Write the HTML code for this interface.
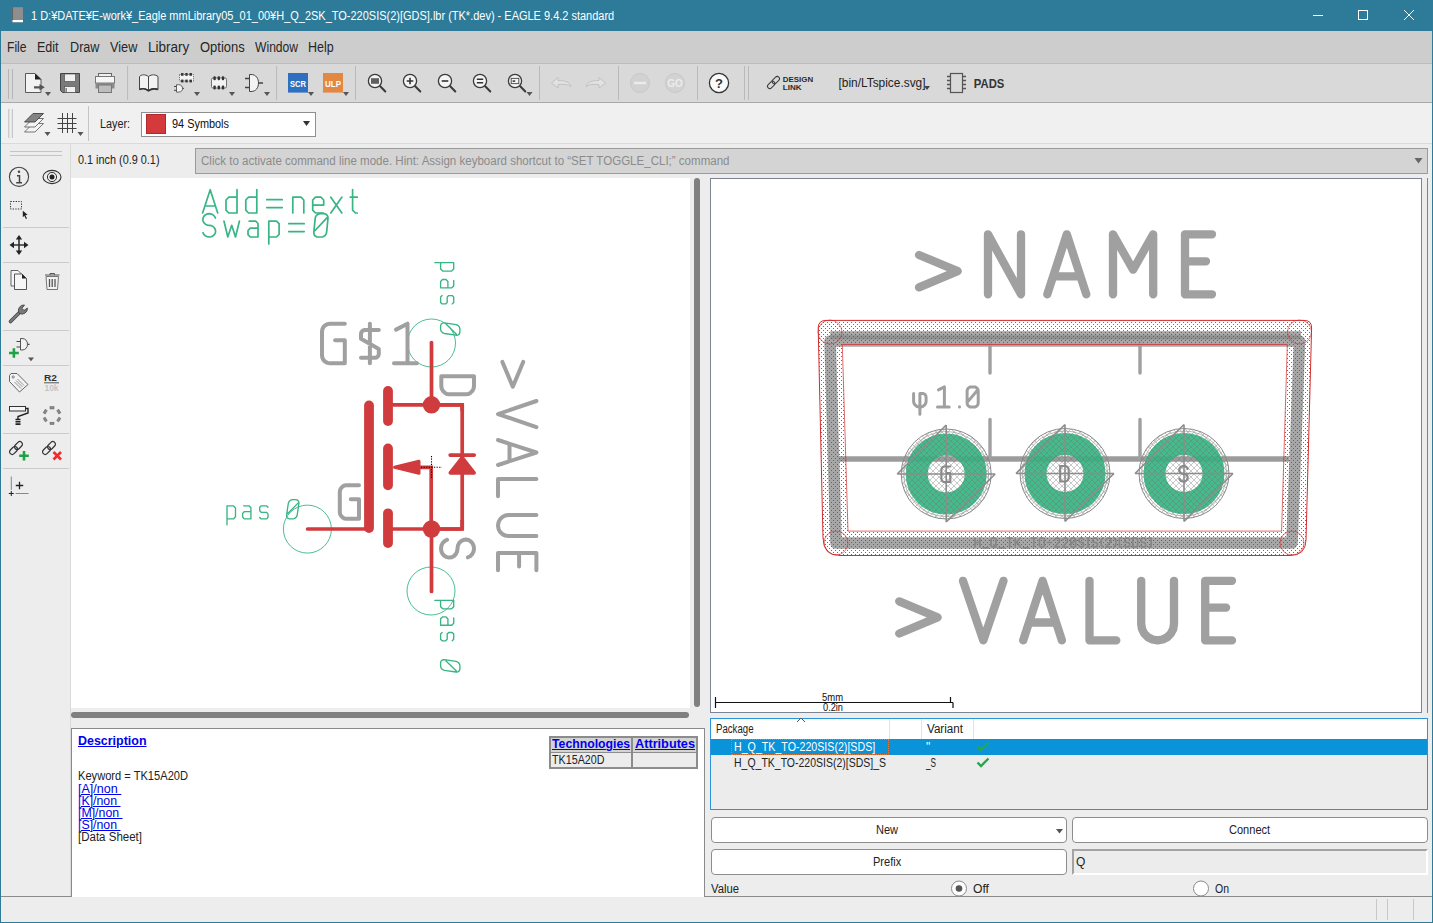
<!DOCTYPE html><html><head><meta charset="utf-8"><style>
html,body{margin:0;padding:0;}
body{width:1433px;height:923px;overflow:hidden;position:relative;background:#ededed;font-family:"Liberation Sans", sans-serif;}
div,svg{box-sizing:border-box;}
a{color:#0000ee;}
</style></head><body>
<div style="position:absolute;left:0px;top:0px;width:1433px;height:31px;background:#2d7b99;"></div>
<svg style="position:absolute;left:10px;top:6px;" width="16" height="18" viewBox="10 6 16 18"><rect x="11.5" y="7.2" width="11.5" height="15" fill="#8e8e8e"/><rect x="11.5" y="7.2" width="1.5" height="15" fill="#5e5e5e"/><rect x="12.5" y="20" width="10.5" height="2.2" fill="#fff"/></svg>
<div style="position:absolute;left:31.20px;top:9.94px;font-size:12px;line-height:1;color:#ffffff;white-space:nowrap;transform:scaleX(0.9153);transform-origin:0 0;">1 D:&yen;DATE&yen;E-work&yen;_Eagle mmLibrary05_01_00&yen;H_Q_2SK_TO-220SIS(2)[GDS].lbr (TK*.dev) - EAGLE 9.4.2 standard</div>
<svg style="position:absolute;left:1300px;top:0px;" width="133" height="31" viewBox="1300 0 133 31"><path d="M1313 15.5H1323" stroke="#fff" stroke-width="1"/><rect x="1358.5" y="10.5" width="9" height="9" fill="none" stroke="#fff" stroke-width="1"/><path d="M1404 10L1414 20M1414 10L1404 20" stroke="#fff" stroke-width="1"/></svg>
<div style="position:absolute;left:0px;top:31px;width:1px;height:892px;background:#2d7b99;"></div>
<div style="position:absolute;left:1432px;top:31px;width:1px;height:892px;background:#2d7b99;"></div>
<div style="position:absolute;left:0px;top:922px;width:1433px;height:1px;background:#2d7b99;"></div>
<div style="position:absolute;left:1px;top:31px;width:1431px;height:32px;background:#cdcdcd;"></div>
<div style="position:absolute;left:1px;top:63px;width:1431px;height:1px;background:#bdbdbd;"></div>
<div style="position:absolute;left:6.50px;top:39.95px;font-size:14px;line-height:1;color:#262626;white-space:nowrap;transform:scaleX(0.8645);transform-origin:0 0;">File</div>
<div style="position:absolute;left:37.40px;top:39.95px;font-size:14px;line-height:1;color:#262626;white-space:nowrap;transform:scaleX(0.8954);transform-origin:0 0;">Edit</div>
<div style="position:absolute;left:70.20px;top:39.95px;font-size:14px;line-height:1;color:#262626;white-space:nowrap;transform:scaleX(0.9030);transform-origin:0 0;">Draw</div>
<div style="position:absolute;left:110.40px;top:39.95px;font-size:14px;line-height:1;color:#262626;white-space:nowrap;transform:scaleX(0.9072);transform-origin:0 0;">View</div>
<div style="position:absolute;left:148.40px;top:39.95px;font-size:14px;line-height:1;color:#262626;white-space:nowrap;transform:scaleX(0.9652);transform-origin:0 0;">Library</div>
<div style="position:absolute;left:200.40px;top:39.95px;font-size:14px;line-height:1;color:#262626;white-space:nowrap;transform:scaleX(0.9265);transform-origin:0 0;">Options</div>
<div style="position:absolute;left:254.90px;top:39.95px;font-size:14px;line-height:1;color:#262626;white-space:nowrap;transform:scaleX(0.8656);transform-origin:0 0;">Window</div>
<div style="position:absolute;left:308.00px;top:39.95px;font-size:14px;line-height:1;color:#262626;white-space:nowrap;transform:scaleX(0.8926);transform-origin:0 0;">Help</div>
<div style="position:absolute;left:1px;top:64px;width:1431px;height:38px;background:#d9d9d9;"></div>
<div style="position:absolute;left:1px;top:102px;width:1431px;height:1px;background:#a9a9a9;"></div>
<div style="position:absolute;left:1px;top:103px;width:1431px;height:40px;background:#f0f0f0;"></div>
<div style="position:absolute;left:1px;top:143px;width:1431px;height:1px;background:#dadada;"></div>
<div style="position:absolute;left:1px;top:144px;width:69px;height:753px;background:#ededed;"></div>
<div style="position:absolute;left:70px;top:144px;width:1px;height:753px;background:#dadada;"></div>
<div style="position:absolute;left:1px;top:896px;width:1431px;height:1px;background:#8c8c8c;"></div>
<div style="position:absolute;left:1px;top:897px;width:1431px;height:25px;background:#ededed;"></div>
<div style="position:absolute;left:1376px;top:899px;width:1px;height:21px;background:#c8c8c8;"></div>
<div style="position:absolute;left:1387px;top:899px;width:1px;height:21px;background:#c8c8c8;"></div>
<div style="position:absolute;left:1413px;top:899px;width:1px;height:21px;background:#c8c8c8;"></div>
<svg style="position:absolute;left:0;top:0" width="1433" height="145" viewBox="0 0 1433 145"><path d="M8.5 69V99" stroke="#b5b5b5" stroke-width="1"/><path d="M12.5 69V99" stroke="#b5b5b5" stroke-width="1"/><path d="M25.5 73.5H35L41 79.5V92.5H25.5Z" fill="#f3f3f3" stroke="#5a5a5a" stroke-width="1"/><path d="M35 73.5L41.5 79.5H35Z" fill="#222"/><path d="M34 86.2H39.5V84L44.8 87.3L39.5 90.6V88.4H34Z" fill="#555"/><path d="M45.0 92.0h6l-3 4z" fill="#555"/><path d="M60.5 73.5H79.5V92.5H62.5L60.5 90.5Z" fill="#7a7a7a" stroke="#444" stroke-width="1"/><rect x="64.5" y="74" width="11" height="7.5" fill="#f0f0f0" stroke="#444" stroke-width="0.6"/><rect x="64.5" y="86.5" width="11" height="6" fill="#f0f0f0" stroke="#444" stroke-width="0.6"/><rect x="65.6" y="88" width="1" height="4" fill="#444"/><rect x="98.5" y="73.5" width="13" height="7" fill="#f0f0f0" stroke="#666" stroke-width="1"/><rect x="95.5" y="76.5" width="19" height="6.5" fill="#f6f6f6" stroke="#777" stroke-width="1"/><rect x="95.5" y="83" width="19" height="5.5" fill="#8a8a8a"/><rect x="98.5" y="85" width="13" height="7.5" fill="#bdbdbd" stroke="#777" stroke-width="1"/><path d="M127.6 66V100" stroke="#b9b9b9" stroke-width="1"/><path d="M148.5 76.5C145 74 141.5 74.5 139.5 76.5V89.5C141.5 88 145 88 148.5 90.5C152 88 155.5 88 158 89.5V76.5C155.5 74.5 152 74 148.5 76.5Z" fill="#f2f2f2" stroke="#444" stroke-width="1"/><path d="M148.5 76.5V90.5" stroke="#444" stroke-width="1"/><path d="M139.5 89.5C142 88.5 145.5 88.5 148.5 90.8C151.5 88.5 155 88.5 158 89.5" stroke="#333" stroke-width="1.6" fill="none"/><rect x="179.5" y="74.5" width="14" height="6.5" fill="#f3f3f3" stroke="#555" stroke-width="0.8" stroke-dasharray="1.2 1"/><rect x="181.1" y="73" width="2.4" height="2.8" fill="#333"/><rect x="181.1" y="79.6" width="2.4" height="2.8" fill="#333"/><rect x="185.3" y="73" width="2.4" height="2.8" fill="#333"/><rect x="185.3" y="79.6" width="2.4" height="2.8" fill="#333"/><rect x="189.5" y="73" width="2.4" height="2.8" fill="#333"/><rect x="189.5" y="79.6" width="2.4" height="2.8" fill="#333"/><path d="M176.5 84.7H178.5C181.5 84.7 182.5 86.5 182.5 88.4C182.5 90.3 181.5 92.1 178.5 92.1H176.5Z" fill="#f3f3f3" stroke="#444" stroke-width="0.8"/><path d="M174 86.5H176.5M174 90.3H176.5M182.5 88.4H184" stroke="#444" stroke-width="1"/><path d="M194.0 92.0h6l-3 4z" fill="#555"/><rect x="211.5" y="78" width="15" height="10" rx="1.5" fill="#f3f3f3" stroke="#555" stroke-width="0.8"/><rect x="213.4" y="76.3" width="2.4" height="4" rx="1" fill="#333"/><rect x="213.4" y="85.6" width="2.4" height="4" rx="1" fill="#333"/><rect x="217.6" y="76.3" width="2.4" height="4" rx="1" fill="#333"/><rect x="217.6" y="85.6" width="2.4" height="4" rx="1" fill="#333"/><rect x="221.8" y="76.3" width="2.4" height="4" rx="1" fill="#333"/><rect x="221.8" y="85.6" width="2.4" height="4" rx="1" fill="#333"/><path d="M229.0 92.0h6l-3 4z" fill="#555"/><path d="M249.5 74.5H251C256 74.5 258.5 78.5 258.5 83C258.5 87.5 256 91.5 251 91.5H249.5Z" fill="#f3f3f3" stroke="#444" stroke-width="1"/><path d="M245 78.5H249.5M245 87.5H249.5M258.5 83H263" stroke="#444" stroke-width="1.4"/><path d="M264.0 92.0h6l-3 4z" fill="#555"/><path d="M276.6 66V100" stroke="#b9b9b9" stroke-width="1"/><rect x="288" y="73" width="20" height="19.6" fill="#2f6fc0"/><text x="298" y="87" font-family="Liberation Sans" font-size="9.5" font-weight="bold" fill="#fff" text-anchor="middle" textLength="16" lengthAdjust="spacingAndGlyphs">SCR</text><path d="M308.0 92.0h6l-3 4z" fill="#555"/><rect x="323" y="73" width="20" height="19.6" fill="#e28843"/><text x="333" y="87" font-family="Liberation Sans" font-size="9.5" font-weight="bold" fill="#fff" text-anchor="middle" textLength="16" lengthAdjust="spacingAndGlyphs">ULP</text><path d="M343.0 92.0h6l-3 4z" fill="#555"/><path d="M355.5 66V100" stroke="#b9b9b9" stroke-width="1"/><circle cx="375.0" cy="81" r="6.6" fill="#f4f4f4" stroke="#3a3a3a" stroke-width="1.3"/><path d="M380.2 86.2L385.3 91.5" stroke="#3a3a3a" stroke-width="2" stroke-linecap="round"/><rect x="371" y="78.2" width="8" height="5.6" fill="#606060"/><circle cx="410.0" cy="81" r="6.6" fill="#f4f4f4" stroke="#3a3a3a" stroke-width="1.3"/><path d="M415.2 86.2L420.3 91.5" stroke="#3a3a3a" stroke-width="2" stroke-linecap="round"/><path d="M406.7 81H413.3M410 77.7V84.3" stroke="#333" stroke-width="1.6"/><circle cx="445.0" cy="81" r="6.6" fill="#f4f4f4" stroke="#3a3a3a" stroke-width="1.3"/><path d="M450.2 86.2L455.3 91.5" stroke="#3a3a3a" stroke-width="2" stroke-linecap="round"/><path d="M441.7 81H448.3" stroke="#333" stroke-width="1.6"/><circle cx="480.0" cy="81" r="6.6" fill="#f4f4f4" stroke="#3a3a3a" stroke-width="1.3"/><path d="M485.2 86.2L490.3 91.5" stroke="#3a3a3a" stroke-width="2" stroke-linecap="round"/><path d="M476.8 79.3H483.2M476.8 82.7H483.2" stroke="#333" stroke-width="1.4"/><circle cx="515.0" cy="81" r="6.6" fill="#f4f4f4" stroke="#3a3a3a" stroke-width="1.3"/><path d="M520.2 86.2L525.3 91.5" stroke="#3a3a3a" stroke-width="2" stroke-linecap="round"/><rect x="511.2" y="78.4" width="7.6" height="5.2" fill="#f4f4f4" stroke="#555" stroke-width="1"/><rect x="512.6" y="80.2" width="2.6" height="1.8" fill="#555"/><path d="M526.5 92.0h6l-3 4z" fill="#555"/><path d="M539.5 66V100" stroke="#b9b9b9" stroke-width="1"/><path d="M551.5 83L558 77.5V80.5C564 80.5 570 81.5 571 86.5C568 84 563 84 558 84.5V88Z" fill="#e2e2e2" stroke="#c2c2c2" stroke-width="1"/><path d="M605.5 83L599 77.5V80.5C593 80.5 587 81.5 586 86.5C589 84 594 84 599 84.5V88Z" fill="#e2e2e2" stroke="#c2c2c2" stroke-width="1"/><path d="M618.5 66V100" stroke="#b9b9b9" stroke-width="1"/><circle cx="640" cy="83" r="9.5" fill="#d2d2d2" stroke="#c8c8c8" stroke-width="1"/><path d="M634 83H646" stroke="#ececec" stroke-width="2.4"/><circle cx="675" cy="83" r="9.5" fill="#d2d2d2" stroke="#c8c8c8" stroke-width="1"/><text x="675" y="87" font-family="Liberation Sans" font-size="10" font-weight="bold" fill="#ececec" text-anchor="middle">GO</text><path d="M697.5 66V100" stroke="#b9b9b9" stroke-width="1"/><circle cx="719" cy="83" r="9.6" fill="#fafafa" stroke="#333" stroke-width="1.3"/><text x="719" y="88" font-family="Liberation Sans" font-size="13" font-weight="bold" fill="#333" text-anchor="middle">?</text><path d="M744.5 66V100" stroke="#b9b9b9" stroke-width="1"/><path d="M748.5 66V100" stroke="#b9b9b9" stroke-width="1"/><g transform="translate(773.5 82.5) rotate(-45)" fill="none" stroke="#3a3a3a" stroke-width="1"><rect x="-7.5" y="-2.3" width="8.5" height="4.6" rx="2.3"/><rect x="-1" y="-2.3" width="8.5" height="4.6" rx="2.3"/></g><text x="782.8" y="81.8" font-family="Liberation Sans" font-size="7.8" font-weight="bold" fill="#2a2a2a" textLength="30.3" lengthAdjust="spacingAndGlyphs">DESIGN</text><text x="782.8" y="89.5" font-family="Liberation Sans" font-size="7.8" font-weight="bold" fill="#2a2a2a" textLength="18.8" lengthAdjust="spacingAndGlyphs">LINK</text><text x="838.5" y="87" font-family="Liberation Sans" font-size="12" fill="#222" textLength="87" lengthAdjust="spacingAndGlyphs">[bin/LTspice.svg]</text><path d="M924.0 86.0h6l-3 4z" fill="#444"/><rect x="950.5" y="73.5" width="12" height="19" fill="none" stroke="#555" stroke-width="1.2"/><path d="M947 76.5H950.5M962.5 76.5H966" stroke="#555" stroke-width="1.5"/><path d="M947 80.5H950.5M962.5 80.5H966" stroke="#555" stroke-width="1.5"/><path d="M947 84.5H950.5M962.5 84.5H966" stroke="#555" stroke-width="1.5"/><path d="M947 88.5H950.5M962.5 88.5H966" stroke="#555" stroke-width="1.5"/><text x="973.8" y="88" font-family="Liberation Sans" font-size="13" font-weight="bold" fill="#333" textLength="30.5" lengthAdjust="spacingAndGlyphs">PADS</text><path d="M8.8 109V138" stroke="#bdbdbd" stroke-width="1"/><path d="M12.3 109V138" stroke="#bdbdbd" stroke-width="1"/><path d="M24.5 132L33 123.5H43.5L35 132Z" fill="#f4f4f4" stroke="#555" stroke-width="0.8"/><path d="M24.5 127L33 118.5H43.5L35 127Z" fill="#f4f4f4" stroke="#555" stroke-width="0.8"/><path d="M24.5 122L33 113.5H43.5L35 122Z" fill="#838383" stroke="#333" stroke-width="0.8"/><path d="M44.5 132.0h6l-3 4z" fill="#555"/><path d="M62.5 113V133M67.5 113V133M72.5 113V133M57.5 118.5H76.5M57.5 123.5H76.5M57.5 128.5H76.5" stroke="#444" stroke-width="1"/><path d="M77.5 132.0h6l-3 4z" fill="#555"/><path d="M88.5 106V141" stroke="#c4c4c4" stroke-width="1"/></svg>
<div style="position:absolute;left:100.00px;top:118.34px;font-size:12px;line-height:1;color:#222;white-space:nowrap;transform:scaleX(0.8996);transform-origin:0 0;">Layer:</div>
<div style="position:absolute;left:141px;top:112px;width:175px;height:25px;background:#fff;border:1px solid #8f8f8f;"></div>
<div style="position:absolute;left:146px;top:114px;width:20px;height:20px;background:#d4393c;border:1px solid #b02a2d;"></div>
<div style="position:absolute;left:172.00px;top:118.34px;font-size:12px;line-height:1;color:#111;white-space:nowrap;transform:scaleX(0.9092);transform-origin:0 0;">94 Symbols</div>
<svg style="position:absolute;left:300px;top:118px" width="12" height="10"><path d="M3 3h7l-3.5 5z" fill="#333"/></svg>
<svg style="position:absolute;left:0;top:0" width="72" height="520" viewBox="0 0 72 520"><path d="M10 151.5H62M10 155.5H62" stroke="#c4c4c4" stroke-width="1"/><circle cx="19" cy="176.8" r="9.6" fill="none" stroke="#444" stroke-width="1.1"/><circle cx="19" cy="171.8" r="1.2" fill="#444"/><path d="M17 175.8H19.5V182.8M16.2 182.8H22" stroke="#444" stroke-width="1.5" fill="none"/><ellipse cx="52" cy="177" rx="9" ry="6.6" fill="none" stroke="#333" stroke-width="1.1"/><circle cx="52" cy="177" r="4.6" fill="none" stroke="#333" stroke-width="1"/><circle cx="52" cy="177" r="2.5" fill="#222"/><rect x="10.5" y="201.5" width="11" height="7.5" fill="none" stroke="#333" stroke-width="1" stroke-dasharray="1.3 1.3"/><path d="M22.8 210.8L27.6 214.7L25.4 215.2L27 218.5L25.9 219L24.3 215.7L22.8 217.2Z" fill="#222"/><path d="M3 227.5H69" stroke="#cbcbcb" stroke-width="1"/><path d="M19 237V253M11 245H27" stroke="#333" stroke-width="1.6"/><path d="M19 235L15.8 239.5H22.2ZM19 255L15.8 250.5H22.2ZM9.5 245L14 241.8V248.2ZM28.5 245L24 241.8V248.2Z" fill="#222"/><path d="M3 262.5H69" stroke="#cbcbcb" stroke-width="1"/><path d="M11 270.5H18L22 274.5V286H11Z" fill="#f6f6f6" stroke="#555" stroke-width="0.9"/><path d="M14.5 274H22L26.5 278.5V289.5H14.5Z" fill="#f6f6f6" stroke="#444" stroke-width="0.9"/><path d="M22 274L26.5 278.5H22Z" fill="#222"/><path d="M45 275H59.5M50 275V273.5H54.5V275" stroke="#555" stroke-width="1" fill="none"/><path d="M46 276.5H58.5L57.5 289.5H47Z" fill="#f2f2f2" stroke="#666" stroke-width="0.9"/><path d="M49.5 279V287M52.2 279V287M55 279V287" stroke="#555" stroke-width="1.3"/><path d="M10.5 321.5L20.5 311.5" stroke="#444" stroke-width="3.6" stroke-linecap="round"/><path d="M10.5 321.5L20.5 311.5" stroke="#7a7a7a" stroke-width="2.2" stroke-linecap="round"/><path d="M19 313A5.5 5.5 0 0 1 24.5 305L22 308.3L24 310.5L27.4 308A5.5 5.5 0 0 1 19.5 313.5Z" fill="#7a7a7a" stroke="#444" stroke-width="0.9"/><path d="M3 330.5H69" stroke="#cbcbcb" stroke-width="1"/><path d="M20.5 338.5H22C25.5 338.5 27.5 341 27.5 344.3C27.5 347.5 25.5 350 22 350H20.5Z" fill="#f3f3f3" stroke="#444" stroke-width="0.9"/><path d="M16.5 341.5H20.5M16.5 347H20.5M27.5 344.3H29.5" stroke="#444" stroke-width="1.2"/><path d="M13.9 348.2V357.8M9 353H18.8" stroke="#1ea246" stroke-width="2.6"/><path d="M28 357.5h6l-3 3.8z" fill="#555"/><path d="M3 365.5H69" stroke="#cbcbcb" stroke-width="1"/><path d="M9.5 375.5L11 373.5H17L28 384.5L19.5 392L9.5 381.5Z" fill="#f3f3f3" stroke="#555" stroke-width="0.9"/><circle cx="13.2" cy="377" r="1.1" fill="none" stroke="#555" stroke-width="0.7"/><path d="M16 380.5L22.5 387M17.5 379L24 385.5M14.5 382L21 388.5" stroke="#666" stroke-width="0.7"/><text x="50.5" y="381.2" font-family="Liberation Sans" font-size="9" font-weight="bold" fill="#333" text-anchor="middle" textLength="13" lengthAdjust="spacingAndGlyphs">R2</text><path d="M44 382.8H59" stroke="#444" stroke-width="0.9"/><text x="51.5" y="390.8" font-family="Liberation Sans" font-size="8.5" font-weight="bold" fill="#c4c4c4" text-anchor="middle">10k</text><rect x="9.5" y="406.5" width="16" height="4.5" fill="#f6f6f6" stroke="#333" stroke-width="1"/><path d="M25.5 408.5H28V413L18 416.5V420" stroke="#222" stroke-width="1.4" fill="none"/><path d="M15.5 419.5H20.5M15.5 421.8H20.5M15.5 424.1H20.5" stroke="#222" stroke-width="1.6"/><rect x="50.0" y="406.6" width="4" height="2.4" fill="#888" stroke="#666" stroke-width="0.5" transform="rotate(0 52.0 407.8)"/><rect x="43.2" y="410.5" width="4" height="2.4" fill="#888" stroke="#666" stroke-width="0.5" transform="rotate(-60 45.2 411.7)"/><rect x="43.2" y="418.3" width="4" height="2.4" fill="#888" stroke="#666" stroke-width="0.5" transform="rotate(-120 45.2 419.5)"/><rect x="50.0" y="422.2" width="4" height="2.4" fill="#888" stroke="#666" stroke-width="0.5" transform="rotate(-180 52.0 423.4)"/><rect x="56.8" y="418.3" width="4" height="2.4" fill="#888" stroke="#666" stroke-width="0.5" transform="rotate(-240 58.8 419.5)"/><rect x="56.8" y="410.5" width="4" height="2.4" fill="#888" stroke="#666" stroke-width="0.5" transform="rotate(-300 58.8 411.7)"/><path d="M3 433.5H69" stroke="#cbcbcb" stroke-width="1"/><g transform="translate(16 448) rotate(-45)" fill="none" stroke="#333" stroke-width="1.2"><rect x="-8" y="-2.6" width="9" height="5.2" rx="2.6"/><rect x="-1" y="-2.6" width="9" height="5.2" rx="2.6"/></g><path d="M24 451V460.5M19.2 455.7H28.8" stroke="#1ea246" stroke-width="2.6"/><g transform="translate(49 448) rotate(-45)" fill="none" stroke="#333" stroke-width="1.2"><rect x="-8" y="-2.6" width="9" height="5.2" rx="2.6"/><rect x="-1" y="-2.6" width="9" height="5.2" rx="2.6"/></g><path d="M53.5 452L61 459.5M61 452L53.5 459.5" stroke="#f02b2b" stroke-width="2.6"/><path d="M3 468.5H69" stroke="#cbcbcb" stroke-width="1"/><path d="M11.3 476.5V490" stroke="#888" stroke-width="1"/><path d="M15.6 493.5H28.6" stroke="#888" stroke-width="1"/><path d="M11.3 491V496M8.8 493.5H13.8" stroke="#222" stroke-width="1"/><path d="M19.5 481.8V489.2M15.8 485.5H23.2" stroke="#222" stroke-width="1.3"/></svg>
<div style="position:absolute;left:78.30px;top:154.44px;font-size:12px;line-height:1;color:#222;white-space:nowrap;transform:scaleX(0.9051);transform-origin:0 0;">0.1 inch (0.9 0.1)</div>
<div style="position:absolute;left:195px;top:148px;width:1233px;height:26px;background:#d4d4d4;border:1px solid #9b9b9b;"></div>
<div style="position:absolute;left:201.00px;top:154.84px;font-size:12px;line-height:1;color:#8b8b8b;white-space:nowrap;transform:scaleX(0.9617);transform-origin:0 0;">Click to activate command line mode. Hint: Assign keyboard shortcut to &ldquo;SET TOGGLE_CLI;&rdquo; command</div>
<svg style="position:absolute;left:1412px;top:156px" width="14" height="10"><path d="M2.5 2h8l-4 5.5z" fill="#666"/></svg>
<div style="position:absolute;left:71px;top:178px;width:619px;height:530px;background:#ffffff;"></div>
<div style="position:absolute;left:694px;top:178px;width:6px;height:529px;background:#808080;border-radius:3px;"></div>
<div style="position:absolute;left:71px;top:712px;width:618px;height:6px;background:#808080;border-radius:3px;"></div>
<div style="position:absolute;left:710px;top:178px;width:712px;height:535px;background:#ffffff;border:1px solid #7d8594;"></div>
<div style="position:absolute;left:1427px;top:178px;width:1px;height:535px;background:#7d8594;"></div>
<div style="position:absolute;left:71px;top:728px;width:634px;height:169px;background:#ffffff;border-top:1px solid #8a8a8a;border-left:1px solid #8a8a8a;border-right:1px solid #8a8a8a;"></div>
<div style="position:absolute;left:78.20px;top:734.82px;font-size:12.5px;line-height:1;color:#0000ee;white-space:nowrap;font-weight:bold;transform:scaleX(0.9963);transform-origin:0 0;"><span style="text-decoration:underline">Description</span></div>
<div style="position:absolute;left:78.20px;top:770.44px;font-size:12px;line-height:1;color:#222;white-space:nowrap;transform:scaleX(0.9256);transform-origin:0 0;">Keyword = TK15A20D</div>
<div style="position:absolute;left:78.20px;top:782.64px;font-size:12px;line-height:1;color:#0000ee;white-space:nowrap;transform:scaleX(1.0469);transform-origin:0 0;"><span style="text-decoration:underline">[A]/non&nbsp;</span></div>
<div style="position:absolute;left:78.20px;top:794.64px;font-size:12px;line-height:1;color:#0000ee;white-space:nowrap;transform:scaleX(1.0276);transform-origin:0 0;"><span style="text-decoration:underline">[K]/non&nbsp;</span></div>
<div style="position:absolute;left:78.20px;top:806.64px;font-size:12px;line-height:1;color:#0000ee;white-space:nowrap;transform:scaleX(1.0265);transform-origin:0 0;"><span style="text-decoration:underline">[M]/non&nbsp;</span></div>
<div style="position:absolute;left:78.20px;top:818.64px;font-size:12px;line-height:1;color:#0000ee;white-space:nowrap;transform:scaleX(1.0276);transform-origin:0 0;"><span style="text-decoration:underline">[S]/non&nbsp;</span></div>
<div style="position:absolute;left:78.20px;top:830.54px;font-size:12px;line-height:1;color:#222;white-space:nowrap;transform:scaleX(0.9594);transform-origin:0 0;">[Data Sheet]</div>
<div style="position:absolute;left:549px;top:736px;width:149px;height:33px;background:#8c8c8c;"></div>
<div style="position:absolute;left:551px;top:738px;width:80px;height:14px;background:#d4d4d4;"></div>
<div style="position:absolute;left:633px;top:738px;width:63px;height:14px;background:#d4d4d4;"></div>
<div style="position:absolute;left:551px;top:753px;width:80px;height:14px;background:#ececec;"></div>
<div style="position:absolute;left:633px;top:753px;width:63px;height:14px;background:#ececec;"></div>
<div style="position:absolute;left:551.50px;top:738.34px;font-size:12px;line-height:1;color:#0000ee;white-space:nowrap;font-weight:bold;transform:scaleX(1.0203);transform-origin:0 0;"><span style="text-decoration:underline">Technologies</span></div>
<div style="position:absolute;left:635.00px;top:738.34px;font-size:12px;line-height:1;color:#0000ee;white-space:nowrap;font-weight:bold;transform:scaleX(1.0589);transform-origin:0 0;"><span style="text-decoration:underline">Attributes</span></div>
<div style="position:absolute;left:551.50px;top:753.84px;font-size:12px;line-height:1;color:#222;white-space:nowrap;transform:scaleX(0.8944);transform-origin:0 0;">TK15A20D</div>
<div style="position:absolute;left:710px;top:718px;width:718px;height:92px;background:#ececec;border:1px solid #2b94d9;"></div>
<div style="position:absolute;left:711px;top:719px;width:716px;height:20px;background:#ffffff;"></div>
<div style="position:absolute;left:889px;top:719px;width:1px;height:20px;background:#e3e3e3;"></div>
<div style="position:absolute;left:921px;top:719px;width:1px;height:20px;background:#e3e3e3;"></div>
<div style="position:absolute;left:973px;top:719px;width:1px;height:20px;background:#e3e3e3;"></div>
<div style="position:absolute;left:715.50px;top:723.14px;font-size:12px;line-height:1;color:#222;white-space:nowrap;transform:scaleX(0.8031);transform-origin:0 0;">Package</div>
<svg style="position:absolute;left:795px;top:716px" width="12" height="8"><path d="M2 6L6 2L10 6" stroke="#555" stroke-width="1" fill="none"/></svg>
<div style="position:absolute;left:926.50px;top:723.14px;font-size:12px;line-height:1;color:#222;white-space:nowrap;transform:scaleX(0.9696);transform-origin:0 0;">Variant</div>
<div style="position:absolute;left:711px;top:739px;width:716px;height:16px;background:#0a93d9;"></div>
<div style="position:absolute;left:731px;top:739px;width:158px;height:16px;border:1px dotted #e07a3a;box-sizing:border-box;"></div>
<div style="position:absolute;left:734.30px;top:740.84px;font-size:12px;line-height:1;color:#ffffff;white-space:nowrap;transform:scaleX(0.8871);transform-origin:0 0;">H_Q_TK_TO-220SIS(2)[SDS]</div>
<div style="position:absolute;left:926.00px;top:740.84px;font-size:12px;line-height:1;color:#ffffff;white-space:nowrap;">&quot;</div>
<div style="position:absolute;left:734.30px;top:756.84px;font-size:12px;line-height:1;color:#222;white-space:nowrap;transform:scaleX(0.8744);transform-origin:0 0;">H_Q_TK_TO-220SIS(2)[SDS]_S</div>
<div style="position:absolute;left:926.00px;top:756.84px;font-size:12px;line-height:1;color:#222;white-space:nowrap;transform:scaleX(0.6813);transform-origin:0 0;">_S</div>
<svg style="position:absolute;left:975px;top:741px" width="16" height="12"><path d="M2.5 5.5L6 9L13.5 1.5" stroke="#25a84c" stroke-width="2.4" fill="none"/></svg>
<svg style="position:absolute;left:975px;top:757px" width="16" height="12"><path d="M2.5 5.5L6 9L13.5 1.5" stroke="#25a84c" stroke-width="2.4" fill="none"/></svg>
<div style="position:absolute;left:710.5px;top:817px;width:356px;height:26px;background:#ffffff;border:1px solid #8d8d8d;border-radius:4px;"></div>
<div style="position:absolute;left:876.46px;top:823.84px;font-size:12px;line-height:1;color:#222;white-space:nowrap;transform:scaleX(0.9200);transform-origin:0 0;">New</div>
<svg style="position:absolute;left:1055px;top:827px" width="10" height="8"><path d="M1 2h7l-3.5 4.5z" fill="#555"/></svg>
<div style="position:absolute;left:1072px;top:817px;width:356px;height:26px;background:#ffffff;border:1px solid #8d8d8d;border-radius:4px;"></div>
<div style="position:absolute;left:1228.94px;top:823.84px;font-size:12px;line-height:1;color:#222;white-space:nowrap;transform:scaleX(0.9200);transform-origin:0 0;">Connect</div>
<div style="position:absolute;left:710.5px;top:849px;width:356px;height:26px;background:#ffffff;border:1px solid #8d8d8d;border-radius:4px;"></div>
<div style="position:absolute;left:873.39px;top:855.84px;font-size:12px;line-height:1;color:#222;white-space:nowrap;transform:scaleX(0.9200);transform-origin:0 0;">Prefix</div>
<div style="position:absolute;left:1072px;top:849px;width:356px;height:26px;background:#ececec;border-top:2px solid #a3a3a3;border-left:2px solid #a3a3a3;border-bottom:2px solid #ffffff;border-right:2px solid #ffffff;"></div>
<div style="position:absolute;left:1076.00px;top:856.34px;font-size:12px;line-height:1;color:#222;white-space:nowrap;">Q</div>
<div style="position:absolute;left:711.00px;top:882.84px;font-size:12px;line-height:1;color:#222;white-space:nowrap;transform:scaleX(0.9396);transform-origin:0 0;">Value</div>
<svg style="position:absolute;left:950px;top:880px" width="18" height="18"><circle cx="9" cy="8.5" r="7.5" fill="#fff" stroke="#8a8a8a" stroke-width="1"/><circle cx="9" cy="8.5" r="3.3" fill="#555"/></svg>
<div style="position:absolute;left:972.70px;top:882.84px;font-size:12px;line-height:1;color:#222;white-space:nowrap;transform:scaleX(1.0137);transform-origin:0 0;">Off</div>
<svg style="position:absolute;left:1192px;top:880px" width="18" height="18"><circle cx="9" cy="8.5" r="7.5" fill="#fff" stroke="#8a8a8a" stroke-width="1"/></svg>
<div style="position:absolute;left:1214.50px;top:882.84px;font-size:12px;line-height:1;color:#222;white-space:nowrap;transform:scaleX(0.8746);transform-origin:0 0;">On</div>
<svg style="position:absolute;left:71px;top:178px" width="619" height="530" viewBox="71 178 619 530"><circle cx="431.5" cy="343.0" r="24" fill="none" stroke="#37b585" stroke-width="0.9"/><circle cx="307.4" cy="529.1" r="24" fill="none" stroke="#37b585" stroke-width="0.9"/><circle cx="431.0" cy="591.0" r="24" fill="none" stroke="#37b585" stroke-width="0.9"/><path d="M431.5 342.5L431.5 404.7" stroke="#d03b3d" stroke-width="3.7" stroke-linecap="round"/><path d="M431.5 529.0L431.5 591.5" stroke="#d03b3d" stroke-width="3.7" stroke-linecap="round"/><path d="M307.6 529.0L369.0 529.0" stroke="#d03b3d" stroke-width="3.7" stroke-linecap="round"/><path d="M369.0 405.5L369.0 528.0" stroke="#d03b3d" stroke-width="9.8" stroke-linecap="round"/><path d="M388.0 391.0L388.0 421.0" stroke="#d03b3d" stroke-width="9.8" stroke-linecap="round"/><path d="M388.0 448.5L388.0 485.3" stroke="#d03b3d" stroke-width="9.8" stroke-linecap="round"/><path d="M388.0 513.3L388.0 543.0" stroke="#d03b3d" stroke-width="9.8" stroke-linecap="round"/><path d="M388.0 404.8L462.3 404.8" stroke="#d03b3d" stroke-width="3.7" stroke-linecap="butt"/><path d="M388.0 529.0L462.3 529.0" stroke="#d03b3d" stroke-width="3.7" stroke-linecap="butt"/><path d="M462.2 404.8V529" stroke="#d03b3d" stroke-width="3.7" stroke-linejoin="miter"/><path d="M440 404.8H462.2V411M440 529H462.2V520" fill="none" stroke="#d03b3d" stroke-width="3.7" stroke-linejoin="miter"/><circle cx="431.5" cy="404.8" r="8.7" fill="#d03b3d"/><circle cx="431.5" cy="529.0" r="8.7" fill="#d03b3d"/><path d="M420 467.3H431.2V529" fill="none" stroke="#d03b3d" stroke-width="3.7"/><path d="M394.5 467.3L419 461.3V473.3Z" fill="#d03b3d" stroke="#d03b3d" stroke-width="3" stroke-linejoin="round"/><path d="M462.2 457.5L450.3 472.9H474.1Z" fill="#d03b3d" stroke="#d03b3d" stroke-width="3.6" stroke-linejoin="round"/><path d="M450.2 455.1L474.2 455.1" stroke="#d03b3d" stroke-width="3.7" stroke-linecap="round"/><path d="M421 467.3H442M431.5 456V478" stroke="#000" stroke-width="1.1" stroke-dasharray="1.2 1.4"/><path d="M202.6 213.0L210.2 189.7L217.7 213.0M204.9 206.0L215.4 206.0M237.0 189.7L237.0 213.0M237.0 197.2L228.8 197.2L226.0 200.0L226.0 210.2L228.8 213.0L237.0 213.0M256.8 189.7L256.8 213.0M256.8 197.2L248.6 197.2L245.8 200.0L245.8 210.2L248.6 213.0L256.8 213.0M266.8 199.7L282.2 199.7M266.8 207.6L282.2 207.6M292.8 213.0L292.8 197.2L301.0 197.2L303.8 200.0L303.8 213.0M312.7 205.1L323.7 205.1L323.7 200.0L320.9 197.2L315.5 197.2L312.7 200.0L312.7 210.2L315.5 213.0L323.2 213.0M330.8 197.2L341.8 213.0M330.8 213.0L341.8 197.2M352.6 189.7L352.6 210.2L355.4 213.0L357.3 213.0M350.3 197.2L357.3 197.2" fill="none" stroke="#37b585" stroke-width="1.70" stroke-linecap="round" stroke-linejoin="round"/><path d="M215.4 218.0L214.6 216.3L213.2 215.0L211.4 214.1L209.4 213.7L207.4 213.9L205.6 214.7L204.1 216.0L203.2 217.6L202.8 219.4L203.1 221.2L204.0 222.9L205.4 224.2L207.2 225.1L209.2 225.3L209.2 225.3L211.2 225.6L213.0 226.5L214.4 227.8L215.3 229.5L215.6 231.3L215.3 233.1L214.3 234.7L212.8 236.0L211.0 236.8L209.0 237.0L207.0 236.6L205.2 235.7L203.8 234.4L203.0 232.7M224.0 221.2L227.8 237.0L231.7 225.3L235.5 237.0L239.4 221.2M249.2 221.2L255.7 221.2L258.0 223.5L258.0 237.0M258.0 228.1L250.3 228.1L248.0 230.5L248.0 234.7L250.3 237.0L258.0 237.0M268.8 221.2L268.8 244.0M268.8 221.2L276.5 221.2L279.1 223.7L279.1 234.4L276.5 237.0L268.8 237.0M288.8 223.7L304.2 223.7M288.8 231.6L304.2 231.6" fill="none" stroke="#37b585" stroke-width="1.70" stroke-linecap="round" stroke-linejoin="round"/><path d="M320.3 213.7L323.8 213.7L323.8 213.7L325.2 213.9L326.4 214.6L327.4 215.6L327.9 216.9L328.0 218.4L326.6 232.3L326.6 232.3L326.2 233.8L325.4 235.1L324.3 236.1L322.9 236.8L321.5 237.0L318.0 237.0L318.0 237.0L316.5 236.8L315.3 236.1L314.4 235.1L313.9 233.8L313.8 232.3L315.2 218.4L315.2 218.4L315.5 216.9L316.3 215.6L317.5 214.6L318.8 213.9L320.3 213.7M315.1 230.5L326.9 217.9" fill="none" stroke="#37b585" stroke-width="1.70" stroke-linecap="round" stroke-linejoin="round"/><path d="M344.8 323.7L329.9 323.7L329.9 323.7L327.5 324.1L325.3 325.2L323.5 327.0L322.4 329.2L322.0 331.6L322.0 355.4L322.0 355.4L322.4 357.8L323.5 360.0L325.3 361.8L327.5 362.9L329.9 363.3L344.8 363.3L344.8 340.3L335.1 340.3M378.8 330.0L365.0 330.0L365.0 330.0L363.4 330.3L362.2 331.2L361.3 332.5L361.0 334.0L361.0 338.7L378.8 349.0L378.8 353.8L378.8 353.8L378.5 355.3L377.7 356.6L376.4 357.5L374.9 357.8L361.0 357.8M369.9 323.7L369.9 363.3M396.0 329.6L407.5 323.7L407.5 363.3M394.0 363.3L417.0 363.3" fill="none" stroke="#a0a0a0" stroke-width="4.00" stroke-linecap="round" stroke-linejoin="round"/><path d="M359.0 485.3L346.5 485.3L346.5 485.3L344.4 485.6L342.6 486.6L341.1 488.1L340.1 489.9L339.8 492.0L339.8 512.0L339.8 512.0L340.1 514.1L341.1 515.9L342.6 517.4L344.4 518.4L346.5 518.7L359.0 518.7L359.0 499.3L350.8 499.3" fill="none" stroke="#a0a0a0" stroke-width="4.00" stroke-linecap="round" stroke-linejoin="round"/><path d="M441.3 376.3L474.0 376.3L474.0 386.1L474.0 386.1L473.6 388.6L472.4 390.9L470.6 392.7L468.4 393.9L465.8 394.3L449.5 394.3L446.9 393.9L444.7 392.7L442.9 390.9L441.7 388.6L441.3 386.1L441.3 376.3" fill="none" stroke="#a0a0a0" stroke-width="4.00" stroke-linecap="round" stroke-linejoin="round"/><path d="M467.9 557.3L470.3 556.2L472.2 554.2L473.5 551.7L474.0 548.9L473.7 546.1L472.6 543.5L470.8 541.4L468.5 540.0L465.9 539.5L463.3 539.9L461.0 541.2L459.1 543.2L457.9 545.7L457.5 548.6L457.5 548.6L457.1 551.4L455.9 554.0L454.0 556.0L451.7 557.2L449.1 557.6L446.5 557.1L444.2 555.8L442.4 553.7L441.3 551.1L441.0 548.2L441.5 545.4L442.8 542.9L444.7 541.0L447.1 539.8" fill="none" stroke="#a0a0a0" stroke-width="4.00" stroke-linecap="round" stroke-linejoin="round"/><path d="M523.2 361.9L512.8 386.7L502.4 361.9M536.4 401.0L498.0 414.1L536.4 427.1M498.0 440.0L536.4 452.5L498.0 465.0M509.5 443.8L509.5 461.1M536.4 479.0L498.0 479.0L498.0 496.3M536.4 515.0L508.6 515.0L508.6 515.0L505.3 515.5L502.4 517.0L500.0 519.4L498.5 522.3L498.0 525.6L498.5 528.8L500.0 531.8L502.4 534.1L505.3 535.6L508.6 536.1L536.4 536.1M536.4 570.3L536.4 553.0L498.0 553.0L498.0 570.3M519.1 553.0L519.1 566.4" fill="none" stroke="#a0a0a0" stroke-width="4.00" stroke-linecap="round" stroke-linejoin="round"/><path d="M227.0 505.8L227.0 524.7M227.0 505.8L233.4 505.8L235.5 507.9L235.5 516.8L233.4 518.9L227.0 518.9M243.6 505.8L249.0 505.8L250.9 507.7L250.9 518.9M250.9 511.6L244.5 511.6L242.6 513.5L242.6 517.0L244.5 518.9L250.9 518.9M268.0 507.3L266.5 505.8L261.2 505.8L259.7 507.3L259.7 510.8L261.2 512.3L266.5 512.3L268.0 513.9L268.0 517.4L266.5 518.9L261.2 518.9L259.7 517.4" fill="none" stroke="#37b585" stroke-width="1.35" stroke-linecap="round" stroke-linejoin="round"/><path d="M292.8 499.6L295.6 499.6L295.6 499.6L296.8 499.8L297.8 500.3L298.5 501.2L298.9 502.3L298.9 503.5L297.2 515.0L297.2 515.0L296.8 516.2L296.1 517.3L295.1 518.2L294.0 518.7L292.8 518.9L289.9 518.9L289.9 518.9L288.7 518.7L287.7 518.2L287.0 517.3L286.6 516.2L286.6 515.0L288.3 503.5L288.3 503.5L288.7 502.3L289.4 501.2L290.4 500.3L291.5 499.8L292.8 499.6M287.8 513.5L298.0 503.1" fill="none" stroke="#37b585" stroke-width="1.35" stroke-linecap="round" stroke-linejoin="round"/><path d="M453.7 262.6L434.8 262.6M453.7 262.6L453.7 269.0L451.6 271.1L442.7 271.1L440.6 269.0L440.6 262.6M453.7 280.5L453.7 285.9L451.8 287.8L440.6 287.8M447.9 287.8L447.9 281.4L446.0 279.5L442.5 279.5L440.6 281.4L440.6 287.8M452.2 303.9L453.7 302.4L453.7 297.1L452.2 295.6L448.7 295.6L447.2 297.1L447.2 302.4L445.6 303.9L442.1 303.9L440.6 302.4L440.6 297.1L442.1 295.6" fill="none" stroke="#37b585" stroke-width="1.35" stroke-linecap="round" stroke-linejoin="round"/><path d="M459.9 329.1L459.9 331.9L459.9 331.9L459.7 333.1L459.2 334.1L458.3 334.8L457.2 335.2L456.0 335.2L444.5 333.5L444.5 333.5L443.3 333.1L442.2 332.4L441.3 331.4L440.8 330.3L440.6 329.1L440.6 326.2L440.6 326.2L440.8 325.0L441.3 324.0L442.2 323.3L443.3 322.9L444.5 322.9L456.0 324.6L456.0 324.6L457.2 325.0L458.3 325.7L459.2 326.7L459.7 327.8L459.9 329.1M446.0 324.1L456.4 334.3" fill="none" stroke="#37b585" stroke-width="1.35" stroke-linecap="round" stroke-linejoin="round"/><path d="M453.7 600.3L434.8 600.3M453.7 600.3L453.7 606.7L451.6 608.8L442.7 608.8L440.6 606.7L440.6 600.3M453.7 617.9L453.7 623.3L451.8 625.2L440.6 625.2M447.9 625.2L447.9 618.8L446.0 616.9L442.5 616.9L440.6 618.8L440.6 625.2M452.2 640.8L453.7 639.3L453.7 634.0L452.2 632.5L448.7 632.5L447.2 634.0L447.2 639.3L445.6 640.8L442.1 640.8L440.6 639.3L440.6 634.0L442.1 632.5" fill="none" stroke="#37b585" stroke-width="1.35" stroke-linecap="round" stroke-linejoin="round"/><path d="M459.9 665.9L459.9 668.8L459.9 668.8L459.7 669.9L459.2 670.9L458.3 671.6L457.2 672.0L456.0 672.0L444.5 670.3L444.5 670.3L443.3 669.9L442.2 669.2L441.3 668.2L440.8 667.1L440.6 665.9L440.6 663.0L440.6 663.0L440.8 661.8L441.3 660.8L442.2 660.1L443.3 659.7L444.5 659.7L456.0 661.4L456.0 661.4L457.2 661.8L458.3 662.5L459.2 663.5L459.7 664.6L459.9 665.9M446.0 660.9L456.4 671.1" fill="none" stroke="#37b585" stroke-width="1.35" stroke-linecap="round" stroke-linejoin="round"/></svg>
<svg style="position:absolute;left:711px;top:179px" width="710" height="533" viewBox="711 179 710 533"><defs>
<pattern id="dots" x="0" y="0" width="4" height="4" patternUnits="userSpaceOnUse"><rect x="1" y="0" width="1" height="1" fill="#d42a2a"/><rect x="3" y="2" width="1" height="1" fill="#d42a2a"/></pattern>
<pattern id="hatch" x="0" y="0" width="6" height="6" patternUnits="userSpaceOnUse"><path d="M-1 7L7 -1M-1 -1L7 7" stroke="#707070" stroke-width="0.7" fill="none" opacity="0.55"/></pattern>
</defs><rect x="830.2" y="331.2" width="470.7" height="8.2" fill="#8a8a8a" opacity="0.75"/><path d="M836 543L830.1 341H1299.5L1292 543Z" fill="none" stroke="#8a8a8a" stroke-width="11.6" stroke-linejoin="round" opacity="0.75"/><path d="M838.5 458.9H1289" stroke="#9c9c9c" stroke-width="5.5"/><path d="M990 340.5V373M990 419.5V458" stroke="#a0a0a0" stroke-width="3.4" stroke-linecap="round"/><path d="M1140 340.5V373M1140 419.5V458" stroke="#a0a0a0" stroke-width="3.4" stroke-linecap="round"/><path d="M818.2 328Q818.2 320.4 826 320.4H1304Q1311.8 320.4 1311.6 328L1306 540Q1305.6 555.5 1290 555.5H840Q823.5 555.5 823 538Z M842.3 344.5H1287.3L1281.6 531.1H848Z" fill="url(#dots)" fill-rule="evenodd" opacity="0.9"/><path d="M818.2 328Q818.2 320.4 826 320.4H1304Q1311.8 320.4 1311.6 328L1306 540Q1305.6 555.5 1290 555.5H840Q823.5 555.5 823 538Z" fill="none" stroke="#d42c2c" stroke-width="1"/><path d="M842.3 344.5H1287.3L1281.6 531.1H848Z" fill="none" stroke="#d42c2c" stroke-width="1" opacity="0.7"/><circle cx="830" cy="332" r="12" fill="none" stroke="#d42c2c" stroke-width="0.8" opacity="0.75"/><circle cx="1299.5" cy="332" r="12" fill="none" stroke="#d42c2c" stroke-width="0.8" opacity="0.75"/><circle cx="836" cy="543" r="12" fill="none" stroke="#d42c2c" stroke-width="0.8" opacity="0.75"/><circle cx="1292" cy="543" r="12" fill="none" stroke="#d42c2c" stroke-width="0.8" opacity="0.75"/><circle cx="946.2" cy="474.0" r="29.5" fill="none" stroke="#35b582" stroke-width="22" opacity="0.92"/><circle cx="946.2" cy="474.0" r="45" fill="url(#hatch)" stroke="#8a8a8a" stroke-width="1"/><circle cx="946.2" cy="474.0" r="42.5" fill="none" stroke="#9a9a9a" stroke-width="0.7"/><path d="M897.2 474.0H995.2M946.2 425.0V522.0M897.2 474.0L946.2 425.0M946.2 522.0L995.2 474.0" stroke="#8c8c8c" stroke-width="1.6" fill="none"/><path d="M950.3 466.5L944.5 466.5L944.5 466.5L943.5 466.7L942.7 467.1L942.0 467.8L941.6 468.6L941.4 469.6L941.4 478.9L941.4 478.9L941.6 479.9L942.0 480.7L942.7 481.4L943.5 481.8L944.5 482.0L950.3 482.0L950.3 473.0L946.5 473.0" fill="none" stroke="#8a8a8a" stroke-width="2.20" stroke-linecap="round" stroke-linejoin="round"/><circle cx="1065.0" cy="473.5" r="29.5" fill="none" stroke="#35b582" stroke-width="22" opacity="0.92"/><circle cx="1065.0" cy="473.5" r="45" fill="url(#hatch)" stroke="#8a8a8a" stroke-width="1"/><circle cx="1065.0" cy="473.5" r="42.5" fill="none" stroke="#9a9a9a" stroke-width="0.7"/><path d="M1016.0 473.5H1114.0M1065.0 424.5V521.5M1016.0 473.5L1065.0 424.5M1065.0 521.5L1114.0 473.5" stroke="#8c8c8c" stroke-width="1.6" fill="none"/><path d="M1060.2 481.5L1060.2 466.0L1064.9 466.0L1064.9 466.0L1066.0 466.2L1067.1 466.7L1068.0 467.6L1068.5 468.7L1068.7 469.9L1068.7 477.6L1068.5 478.8L1068.0 479.9L1067.1 480.8L1066.0 481.3L1064.9 481.5L1060.2 481.5" fill="none" stroke="#8a8a8a" stroke-width="2.20" stroke-linecap="round" stroke-linejoin="round"/><circle cx="1184.0" cy="473.5" r="29.5" fill="none" stroke="#35b582" stroke-width="22" opacity="0.92"/><circle cx="1184.0" cy="473.5" r="45" fill="url(#hatch)" stroke="#8a8a8a" stroke-width="1"/><circle cx="1184.0" cy="473.5" r="42.5" fill="none" stroke="#9a9a9a" stroke-width="0.7"/><path d="M1135.0 473.5H1233.0M1184.0 424.5V521.5M1135.0 473.5L1184.0 424.5M1184.0 521.5L1233.0 473.5" stroke="#8c8c8c" stroke-width="1.6" fill="none"/><path d="M1187.6 468.9L1187.0 467.8L1186.1 466.8L1184.9 466.2L1183.6 466.0L1182.3 466.2L1181.1 466.7L1180.1 467.5L1179.4 468.6L1179.2 469.8L1179.4 471.0L1180.0 472.1L1180.9 473.0L1182.1 473.6L1183.5 473.8L1183.5 473.8L1184.8 473.9L1186.0 474.5L1186.9 475.4L1187.5 476.5L1187.7 477.7L1187.5 478.9L1186.8 480.0L1185.9 480.8L1184.6 481.3L1183.3 481.5L1182.0 481.3L1180.8 480.7L1179.9 479.7L1179.3 478.6" fill="none" stroke="#8a8a8a" stroke-width="2.20" stroke-linecap="round" stroke-linejoin="round"/><path d="M919.0 255.0L957.7 271.2L919.0 287.4M988.0 294.3L988.0 234.3L1021.0 294.3L1021.0 234.3M1047.3 294.3L1066.8 234.3L1086.3 294.3M1053.3 276.3L1080.3 276.3M1113.0 294.3L1113.0 234.3L1133.1 269.7L1153.2 234.3L1153.2 294.3M1212.0 234.3L1185.0 234.3L1185.0 294.3L1212.0 294.3M1185.0 261.3L1206.0 261.3" fill="none" stroke="#a0a0a0" stroke-width="8.30" stroke-linecap="round" stroke-linejoin="round"/><path d="M899.2 601.3L937.6 617.4L899.2 633.5M963.0 580.8L983.3 640.4L1003.5 580.8M1023.2 640.4L1042.6 580.8L1061.9 640.4M1029.2 622.5L1056.0 622.5M1089.5 580.8L1089.5 640.4L1116.3 640.4M1141.2 580.8L1141.2 624.0L1141.2 624.0L1142.0 629.0L1144.3 633.6L1148.0 637.2L1152.5 639.5L1157.6 640.4L1162.7 639.5L1167.2 637.2L1170.8 633.6L1173.2 629.0L1174.0 624.0L1174.0 580.8M1232.0 580.8L1205.2 580.8L1205.2 640.4L1232.0 640.4M1205.2 607.6L1226.1 607.6" fill="none" stroke="#a0a0a0" stroke-width="8.30" stroke-linecap="round" stroke-linejoin="round"/><path d="M919.9 393.4L919.9 414.2M913.6 393.4L913.6 401.0L913.6 401.0L913.8 402.6L914.4 404.1L915.4 405.3L916.7 406.3L918.2 406.9L919.9 407.1M919.9 393.4L922.1 393.4L922.1 393.4L923.3 393.6L924.5 394.1L925.4 395.0L925.9 396.2L926.1 397.4L926.1 401.0L926.1 401.0L925.9 402.6L925.3 404.1L924.3 405.3L923.0 406.3L921.5 406.9L919.9 407.1M938.5 389.9L944.4 386.9L944.4 407.1M937.5 407.1L949.2 407.1M959.5 407.1L959.5 406.7M971.1 386.9L974.2 386.9L974.2 386.9L975.4 387.1L976.5 387.7L977.4 388.6L978.0 389.7L978.2 390.9L978.2 403.1L978.2 403.1L978.0 404.3L977.4 405.4L976.5 406.3L975.4 406.9L974.2 407.1L971.1 407.1L971.1 407.1L969.9 406.9L968.8 406.3L967.9 405.4L967.3 404.3L967.1 403.1L967.1 390.9L967.1 390.9L967.3 389.7L967.9 388.6L968.8 387.7L969.9 387.1L971.1 386.9M968.1 401.4L977.2 390.5" fill="none" stroke="#a0a0a0" stroke-width="3.00" stroke-linecap="round" stroke-linejoin="round"/><path d="M975.0 547.0L975.0 538.0M980.0 547.0L980.0 538.0M975.0 542.5L980.0 542.5M983.0 547.9L988.0 547.9M992.9 538.0L994.2 538.0L994.2 538.0L994.8 538.1L995.3 538.3L995.7 538.7L996.0 539.2L996.0 539.8L996.0 545.2L996.0 545.2L996.0 545.8L995.7 546.3L995.3 546.7L994.8 546.9L994.2 547.0L992.9 547.0L992.9 547.0L992.3 546.9L991.8 546.7L991.4 546.3L991.2 545.8L991.1 545.2L991.1 539.8L991.1 539.8L991.2 539.2L991.4 538.7L991.8 538.3L992.3 538.1L992.9 538.0M993.8 544.8L996.0 547.0M999.1 547.9L1004.1 547.9M1007.2 538.0L1012.1 538.0M1009.7 538.0L1009.7 547.0M1015.2 547.0L1015.2 538.0M1020.2 538.0L1015.2 543.9M1017.0 542.0L1020.2 547.0M1023.3 547.9L1028.2 547.9M1031.3 538.0L1036.3 538.0M1033.8 538.0L1033.8 547.0M1041.2 538.0L1042.5 538.0L1042.5 538.0L1043.1 538.1L1043.6 538.3L1044.0 538.7L1044.3 539.2L1044.3 539.8L1044.3 545.2L1044.3 545.2L1044.3 545.8L1044.0 546.3L1043.6 546.7L1043.1 546.9L1042.5 547.0L1041.2 547.0L1041.2 547.0L1040.6 546.9L1040.1 546.7L1039.7 546.3L1039.5 545.8L1039.4 545.2L1039.4 539.8L1039.4 539.8L1039.5 539.2L1039.7 538.7L1040.1 538.3L1040.6 538.1L1041.2 538.0M1047.4 542.5L1051.5 542.5M1054.7 539.8L1055.2 538.9L1056.0 538.3L1057.0 538.0L1058.0 538.2L1058.9 538.8L1059.4 539.7L1059.5 540.7L1059.2 541.7L1054.6 547.0L1059.5 547.0M1062.7 539.8L1063.2 538.9L1064.0 538.3L1065.0 538.0L1066.1 538.2L1066.9 538.8L1067.5 539.7L1067.6 540.7L1067.3 541.7L1062.6 547.0L1067.6 547.0M1072.5 538.0L1073.8 538.0L1073.8 538.0L1074.4 538.1L1074.9 538.3L1075.3 538.7L1075.6 539.2L1075.6 539.8L1075.6 545.2L1075.6 545.2L1075.6 545.8L1075.3 546.3L1074.9 546.7L1074.4 546.9L1073.8 547.0L1072.5 547.0L1072.5 547.0L1071.9 546.9L1071.4 546.7L1071.0 546.3L1070.8 545.8L1070.7 545.2L1070.7 539.8L1070.7 539.8L1070.8 539.2L1071.0 538.7L1071.4 538.3L1071.9 538.1L1072.5 538.0M1071.1 544.5L1075.2 539.6M1083.6 539.7L1083.3 539.0L1082.8 538.5L1082.1 538.1L1081.3 538.0L1080.5 538.1L1079.8 538.4L1079.3 538.9L1078.9 539.5L1078.8 540.2L1078.9 540.9L1079.2 541.6L1079.8 542.1L1080.5 542.4L1081.2 542.5L1081.2 542.5L1082.0 542.6L1082.7 542.9L1083.2 543.4L1083.6 544.1L1083.7 544.8L1083.6 545.5L1083.2 546.1L1082.6 546.6L1081.9 546.9L1081.1 547.0L1080.4 546.9L1079.7 546.5L1079.2 546.0L1078.8 545.3M1086.8 538.0L1089.5 538.0M1088.1 538.0L1088.1 547.0M1086.8 547.0L1089.5 547.0M1097.5 539.7L1097.1 539.0L1096.6 538.5L1095.9 538.1L1095.2 538.0L1094.4 538.1L1093.7 538.4L1093.1 538.9L1092.7 539.5L1092.6 540.2L1092.7 540.9L1093.1 541.6L1093.6 542.1L1094.3 542.4L1095.1 542.5L1095.1 542.5L1095.8 542.6L1096.5 542.9L1097.1 543.4L1097.4 544.1L1097.5 544.8L1097.4 545.5L1097.0 546.1L1096.5 546.6L1095.8 546.9L1095.0 547.0L1094.2 546.9L1093.5 546.5L1093.0 546.0L1092.7 545.3M1102.9 538.0L1101.1 540.2L1101.1 544.8L1102.9 547.0M1106.1 539.8L1106.6 538.9L1107.4 538.3L1108.4 538.0L1109.4 538.2L1110.3 538.8L1110.8 539.7L1110.9 540.7L1110.6 541.7L1106.0 547.0L1110.9 547.0M1114.0 538.0L1115.8 540.2L1115.8 544.8L1114.0 547.0M1121.6 538.0L1119.4 538.0L1119.4 547.0L1121.6 547.0M1129.6 539.7L1129.3 539.0L1128.8 538.5L1128.1 538.1L1127.3 538.0L1126.5 538.1L1125.8 538.4L1125.3 538.9L1124.9 539.5L1124.8 540.2L1124.9 540.9L1125.2 541.6L1125.8 542.1L1126.5 542.4L1127.2 542.5L1127.2 542.5L1128.0 542.6L1128.7 542.9L1129.2 543.4L1129.6 544.1L1129.7 544.8L1129.6 545.5L1129.2 546.1L1128.6 546.6L1127.9 546.9L1127.1 547.0L1126.4 546.9L1125.7 546.5L1125.2 546.0L1124.8 545.3M1132.8 547.0L1132.8 538.0L1135.5 538.0L1135.5 538.0L1136.2 538.1L1136.8 538.4L1137.3 538.9L1137.6 539.6L1137.7 540.2L1137.7 544.8L1137.6 545.4L1137.3 546.1L1136.8 546.6L1136.2 546.9L1135.5 547.0L1132.8 547.0M1145.7 539.7L1145.4 539.0L1144.9 538.5L1144.2 538.1L1143.4 538.0L1142.6 538.1L1141.9 538.4L1141.4 538.9L1141.0 539.5L1140.9 540.2L1141.0 540.9L1141.3 541.6L1141.9 542.1L1142.6 542.4L1143.3 542.5L1143.3 542.5L1144.1 542.6L1144.8 542.9L1145.3 543.4L1145.7 544.1L1145.8 544.8L1145.7 545.5L1145.3 546.1L1144.7 546.6L1144.0 546.9L1143.2 547.0L1142.5 546.9L1141.8 546.5L1141.3 546.0L1140.9 545.3M1148.9 538.0L1151.1 538.0L1151.1 547.0L1148.9 547.0" fill="none" stroke="#858585" stroke-width="1.70" stroke-linecap="round" stroke-linejoin="round"/><path d="M715.5 697V708M715.5 702.5H953M950.5 697V702.5M953 702.5V708" stroke="#111" stroke-width="1.2" fill="none"/></svg>
<div style="position:absolute;left:821.50px;top:693.03px;font-size:10px;line-height:1;color:#111;white-space:nowrap;transform:scaleX(0.9451);transform-origin:0 0;">5mm</div>
<div style="position:absolute;left:822.50px;top:703.03px;font-size:10px;line-height:1;color:#111;white-space:nowrap;transform:scaleX(0.9224);transform-origin:0 0;">0.2in</div>
</body></html>
